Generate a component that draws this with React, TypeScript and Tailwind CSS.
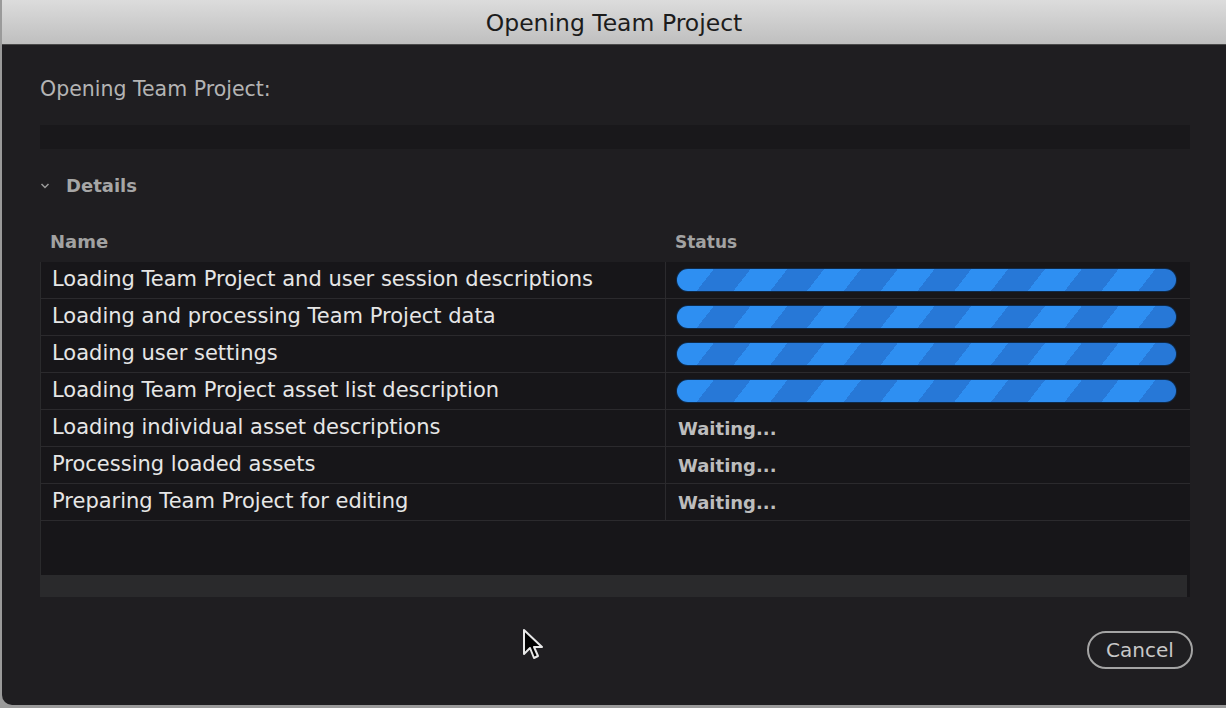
import React from 'react'

type Step = { name: string; done: boolean }

const steps: Step[] = [
  { name: 'Loading Team Project and user session descriptions', done: true },
  { name: 'Loading and processing Team Project data', done: true },
  { name: 'Loading user settings', done: true },
  { name: 'Loading Team Project asset list description', done: true },
  { name: 'Loading individual asset descriptions', done: false },
  { name: 'Processing loaded assets', done: false },
  { name: 'Preparing Team Project for editing', done: false },
]

function StripedBar() {
  return (
    <div className="h-[24px] w-full rounded-full bg-[#0e2a4a] p-[1px]">
      <div className="h-full w-full rounded-full bg-[repeating-linear-gradient(128deg,#2e8ff2_0px,#2e8ff2_29px,#2778d7_29px,#2778d7_58px)]" />
    </div>
  )
}

function Cursor() {
  return (
    <svg className="absolute left-[522px] top-[628px]" width="24" height="34" viewBox="0 0 24 34">
      <path
        d="M2 2 L2 26 L8 20 L12 30 L16 28 L12 19 L20 19 Z"
        fill="#000"
        stroke="#e8e8e8"
        strokeWidth="2"
        strokeLinejoin="round"
      />
    </svg>
  )
}

export default function App() {
  return (
    <div className="relative w-[1226px] h-[708px] bg-[#9a9a9a] overflow-hidden font-['DejaVu_Sans',sans-serif]">
      <div className="ml-[2px] h-[705px] flex flex-col rounded-bl-[10px] overflow-hidden bg-[#1f1e21]">
        {/* title bar */}
        <div className="h-[45px] shrink-0 flex items-center justify-center pt-[3px] bg-[linear-gradient(#dcdcdc,#bfbfbf)] border-b border-[#4a4a4a]">
          <span className="text-[23.5px] text-[#1c1c1c]">Opening Team Project</span>
        </div>

        <div className="flex flex-col pl-[38px] pr-[36px]">
          <div className="mt-[32px] h-[24px] leading-[24px] text-[20.5px] text-[#b4b4b4]">Opening Team Project:</div>

          <div className="mt-[24px] h-[24px] bg-[#19181b]" />

          <div className="mt-[25px] h-[24px] flex items-center gap-[16px]">
            <svg width="10" height="8" viewBox="0 0 10 8">
              <path d="M1.5 2 L5 5.5 L8.5 2" fill="none" stroke="#9a9a9a" strokeWidth="1.5" />
            </svg>
            <span className="text-[18px] leading-[24px] text-[#a6a6a6] font-bold">Details</span>
          </div>

          <div className="mt-[32px] h-[24px] flex text-[17px] leading-[24px] text-[#a2a2a2] font-bold">
            <div className="w-[625px] pl-[10px] text-[18px] font-semibold">Name</div>
            <div className="pl-[10px]">Status</div>
          </div>

          <div className="mt-[8px] flex flex-col bg-[#171619] border-l border-[#2a2a2c]">
            {steps.map((s) => (
              <div key={s.name} className="h-[37px] flex border-b border-[#2b2a2d]">
                <div className="w-[625px] shrink-0 pl-[11px] flex items-center border-r border-[#2b2a2d] text-[21px] text-[#e6e6e6]">
                  {s.name}
                </div>
                <div className="flex-1 flex items-center pl-[10px] pr-[13px]">
                  {s.done ? (
                    <StripedBar />
                  ) : (
                    <span className="pl-[2px] text-[18px] font-bold text-[#bdbdbd]">Waiting...</span>
                  )}
                </div>
              </div>
            ))}
            <div className="h-[54px]" />
            <div className="h-[22px] bg-[#2a2a2c] mr-[3px]" />
          </div>

          <div className="mt-[34px] flex justify-end">
            <button className="h-[38px] w-[106px] mr-[-3px] rounded-full border-2 border-[#a4a4a4] text-[20px] text-[#c8c8c8] flex items-center justify-center">
              Cancel
            </button>
          </div>
        </div>
      </div>
      <Cursor />
    </div>
  )
}
